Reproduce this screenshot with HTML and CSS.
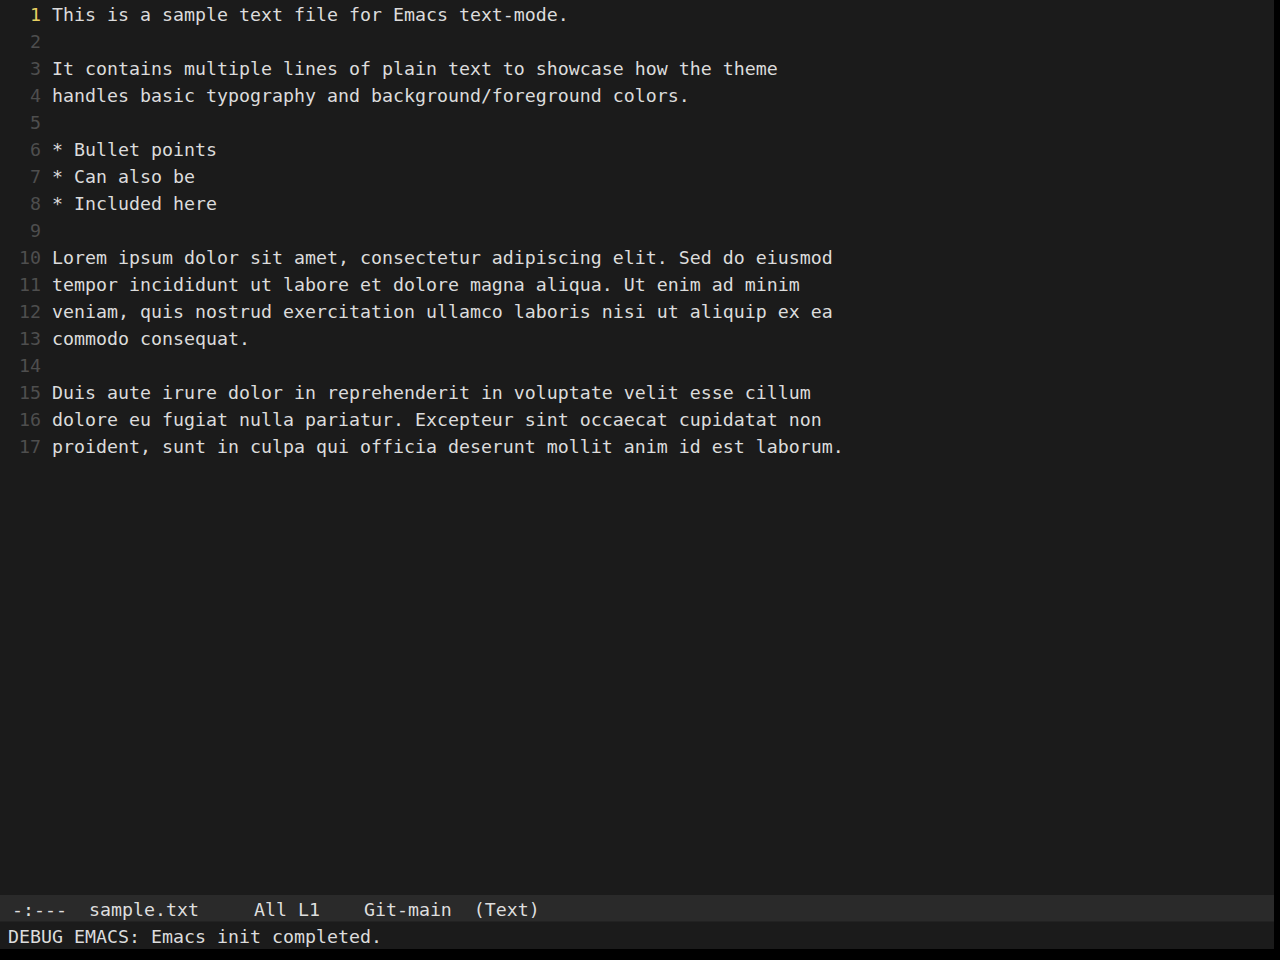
FILE: index.html
```html
<!DOCTYPE html>
<html lang="en">
<head>
    <meta charset="UTF-8">
    <title>sample.txt - Emacs</title>
    <link rel="stylesheet" href="styles.css">
</head>
<body>

<div class="frame">

    <main class="buffer">
        <div class="line current"><span class="num">1</span><span class="txt">This is a sample text file for Emacs text-mode.</span></div>
        <div class="line"><span class="num">2</span><span class="txt"></span></div>
        <div class="line"><span class="num">3</span><span class="txt">It contains multiple lines of plain text to showcase how the theme</span></div>
        <div class="line"><span class="num">4</span><span class="txt">handles basic typography and background/foreground colors.</span></div>
        <div class="line"><span class="num">5</span><span class="txt"></span></div>
        <div class="line"><span class="num">6</span><span class="txt">* Bullet points</span></div>
        <div class="line"><span class="num">7</span><span class="txt">* Can also be</span></div>
        <div class="line"><span class="num">8</span><span class="txt">* Included here</span></div>
        <div class="line"><span class="num">9</span><span class="txt"></span></div>
        <div class="line"><span class="num">10</span><span class="txt">Lorem ipsum dolor sit amet, consectetur adipiscing elit. Sed do eiusmod</span></div>
        <div class="line"><span class="num">11</span><span class="txt">tempor incididunt ut labore et dolore magna aliqua. Ut enim ad minim</span></div>
        <div class="line"><span class="num">12</span><span class="txt">veniam, quis nostrud exercitation ullamco laboris nisi ut aliquip ex ea</span></div>
        <div class="line"><span class="num">13</span><span class="txt">commodo consequat.</span></div>
        <div class="line"><span class="num">14</span><span class="txt"></span></div>
        <div class="line"><span class="num">15</span><span class="txt">Duis aute irure dolor in reprehenderit in voluptate velit esse cillum</span></div>
        <div class="line"><span class="num">16</span><span class="txt">dolore eu fugiat nulla pariatur. Excepteur sint occaecat cupidatat non</span></div>
        <div class="line"><span class="num">17</span><span class="txt">proident, sunt in culpa qui officia deserunt mollit anim id est laborum.</span></div>
    </main>

    <!-- mode line -->
    <div class="mode-line"> -:---  sample.txt     All L1    Git-main  (Text)</div>

    <!-- echo area -->
    <div class="echo">DEBUG EMACS: Emacs init completed.</div>

</div>

</body>
</html>
```

FILE: styles.css
```css
html, body {
    margin: 0;
    height: 100%;
    background: #000;
}

body {
    font-family: "DejaVu Sans Mono", "Liberation Mono", monospace;
    font-size: 18.28px;
    color: #dcdcdc;
}

.frame {
    width: 1274px;
    height: 949px;
    display: flex;
    flex-direction: column;
    background: #1b1b1b;
}

.buffer {
    flex: 1;
    padding-top: 1px;
}

.line {
    display: flex;
    height: 27px;
    line-height: 27px;
    white-space: pre;
}

.num {
    width: 41px;
    padding-right: 11px;
    text-align: right;
    color: #4e4e4e;
    flex: none;
}

.current .num {
    color: #e6cf62;
}

.mode-line {
    height: 27px;
    line-height: 27px;
    padding-top: 1px;
    background: #2a2a2a;
    border-bottom: 1px solid #222;
    box-sizing: border-box;
    padding-left: 1px;
    white-space: pre;
    color: #dedede;
}

.echo {
    height: 27px;
    line-height: 27px;
    padding-top: 1px;
    box-sizing: border-box;
    padding-left: 8px;
    white-space: pre;
    color: #dcdcdc;
}
```
